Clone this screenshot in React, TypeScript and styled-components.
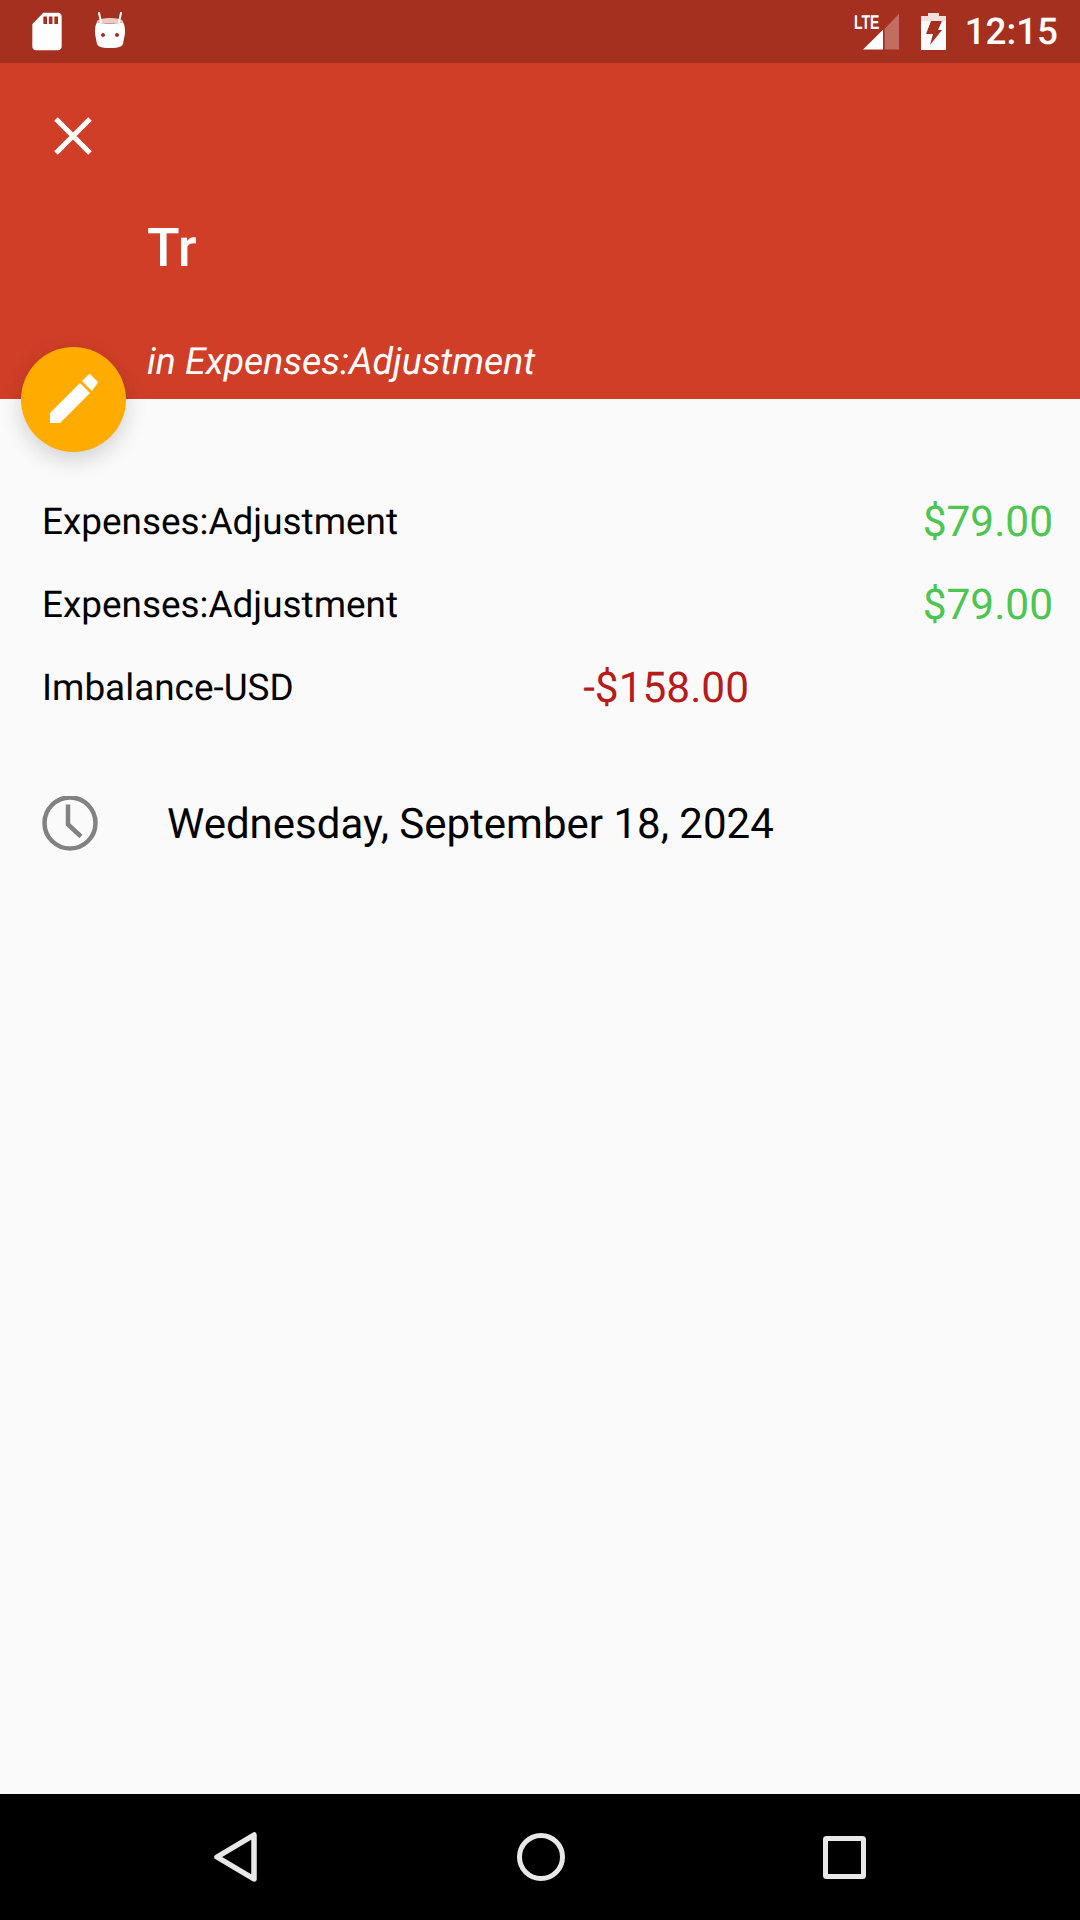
import React from "react";
import styled, { createGlobalStyle } from "styled-components";

const GlobalStyle = createGlobalStyle`
  html, body {
    margin: 0;
    padding: 0;
    background: #fafafa;
    font-family: Roboto, "Liberation Sans", sans-serif;
    text-rendering: geometricPrecision;
  }
`;

const Screen = styled.div`
  width: 1080px;
  height: 1920px;
  display: flex;
  flex-direction: column;
  background: #fafafa;
  overflow: hidden;
`;

const StatusBar = styled.div`
  height: 63px;
  flex: none;
  display: flex;
  align-items: center;
  padding: 0 22px 0 25px;
  background: #a5301f;
  color: #fff;
`;

const StatusLeft = styled.div`
  display: flex;
  align-items: center;
  gap: 23px;
  flex: 1;
`;

const StatusIcon = styled.svg`
  display: block;
  flex: none;
`;

const SignalBox = styled.div`
  position: relative;
  width: 46px;
  height: 40px;
  margin-right: 22px;
`;

const SignalBars = styled.svg`
  position: absolute;
  left: 0;
  top: 0;
`;

const LteLabel = styled.span`
  position: absolute;
  left: 1px;
  top: 1px;
  font-family: "Liberation Sans", Roboto, sans-serif;
  font-size: 20px;
  font-weight: 700;
  line-height: 20px;
  transform: scaleX(0.7);
  transform-origin: left top;
  color: #fff;
`;

const Clock = styled.span`
  font-size: 36.8px;
  font-weight: 500;
  line-height: 63px;
  margin-left: 19px;
  color: #fff;
`;

const Header = styled.header`
  position: relative;
  height: 336px;
  flex: none;
  display: flex;
  flex-direction: column;
  background: #d03e28;
  color: #fff;
`;

const CloseButton = styled.div`
  height: 146px;
  display: flex;
  align-items: center;
  padding-left: 49px;
  flex: none;
`;

const Title = styled.h1`
  margin: 8px 0 0 147px;
  font-size: 53.5px;
  font-weight: 500;
  line-height: 64px;
`;

const Subtitle = styled.p`
  margin: 57px 0 0 147px;
  font-size: 37.4px;
  font-style: italic;
  font-weight: 400;
  line-height: 48px;
`;

const Fab = styled.button`
  position: absolute;
  left: 21px;
  bottom: -53px;
  width: 105px;
  height: 105px;
  padding: 0;
  border: none;
  border-radius: 50%;
  display: flex;
  align-items: center;
  justify-content: center;
  background: #ffab00;
  box-shadow: 0 8px 22px rgba(0, 0, 0, 0.16);
`;

const Content = styled.main`
  flex: 1;
  display: flex;
  flex-direction: column;
  padding: 82px 27px 0 42px;
`;

const SplitRow = styled.div`
  height: 83px;
  display: flex;
  align-items: center;
  justify-content: space-between;
`;

const Account = styled.span`
  font-size: 36.9px;
  color: #000;
`;

const Amount = styled.span<{ $negative?: boolean; $inset?: number }>`
  font-size: 42.4px;
  color: ${(p) => (p.$negative ? "#b71c1c" : "#4cc552")};
  margin-right: ${(p) => p.$inset || 0}px;
`;

const DateRow = styled.div`
  display: flex;
  align-items: center;
  margin-top: 66px;
`;

const DateText = styled.span`
  margin-left: 69px;
  font-size: 42px;
  color: #000;
`;

const NavBar = styled.nav`
  height: 126px;
  flex: none;
  display: flex;
  align-items: center;
  justify-content: space-between;
  padding: 0 214px;
  background: #000;
`;

const Row = ({ name, value, negative, inset }: { name: string; value: string; negative?: boolean; inset?: number }) => (
  <SplitRow>
    <Account>{name}</Account>
    <Amount $negative={negative} $inset={inset}>{value}</Amount>
  </SplitRow>
);

const App: React.FC = () => {
  return (
    <Screen>
      <GlobalStyle />
      <StatusBar>
        <StatusLeft>
          <StatusIcon width="44" height="41" viewBox="0 0 24 22" preserveAspectRatio="none" fill="#fff">
            <path d="M18 1h-8L4.02 7 4 19c0 1.1.9 2 2 2h12c1.1 0 2-.9 2-2V3c0-1.1-.9-2-2-2zm-6 6h-2V3h2v4zm3 0h-2V3h2v4zm3 0h-2V3h2v4z" />
          </StatusIcon>
          <StatusIcon width="36" height="40" viewBox="0 0 36 40" fill="#fff">
            <path d="M7 1l2 9M29 1l-2 9" stroke="#fff" strokeWidth="2" strokeLinecap="round" />
            <path d="M18 6c6 0 11 1 13 3-1 2-1 2-13 2S6 11 5 9c2-2 7-3 13-3z" opacity="0.75" />
            <path fillRule="evenodd" d="M5 10c3 2 23 2 26 0 2 4 2 7 2 10 0 3-1 6-2 12-1 2-3 4-13 4S6 34 5 32c-1-6-2-9-2-12 0-3 0-6 2-10zm6 11a2 2 0 1 0 .01 0zm14 0a2 2 0 1 0 .01 0z" />
          </StatusIcon>
        </StatusLeft>
        <SignalBox>
          <SignalBars width="46" height="40" viewBox="0 0 46 40">
            <path d="M10 37.5L30 17.8V37.5z" fill="#fff" />
            <path d="M31.7 16.8L46 1.8V37.5H31.7z" fill="#fff" opacity="0.3" />
          </SignalBars>
          <LteLabel>LTE</LteLabel>
        </SignalBox>
        <StatusIcon width="25" height="37" viewBox="0 0 25 37">
          <path d="M7 0h11v3h7v5H0V3h7z" fill="#fff" opacity="0.85" />
          <path fillRule="evenodd" fill="#fff" d="M0 8h25v29H0zM10 8H21L17 17H21L9 32 12 21H5z" />
        </StatusIcon>
        <Clock>12:15</Clock>
      </StatusBar>

      <Header>
        <CloseButton>
          <svg width="48" height="48" viewBox="0 0 48 48" stroke="#fff" strokeWidth="5" fill="none">
            <path d="M7 7l34 34M41 7L7 41" />
          </svg>
        </CloseButton>
        <Title>Tr</Title>
        <Subtitle>in Expenses:Adjustment</Subtitle>
        <Fab>
          <svg width="105" height="105" viewBox="0 0 105 105" fill="#fff">
            <path d="M29 66L59 36 69 46 39 76H29z" />
            <path d="M61 34l6-6a2 2 0 0 1 3 0l6 6a2 2 0 0 1 0 3l-5 7z" />
          </svg>
        </Fab>
      </Header>

      <Content>
        <Row name="Expenses:Adjustment" value="$79.00" />
        <Row name="Expenses:Adjustment" value="$79.00" />
        <Row name="Imbalance-USD" value="-$158.00" negative inset={304} />
        <DateRow>
          <svg width="56" height="56" viewBox="0 0 56 56" fill="none" stroke="#828282" strokeWidth="4.5">
            <circle cx="28" cy="27" r="25.5" />
            <path d="M26 8.5v20l13 12" />
          </svg>
          <DateText>Wednesday, September 18, 2024</DateText>
        </DateRow>
      </Content>

      <NavBar>
        <svg width="44" height="50" viewBox="0 0 44 50" fill="none" stroke="#e8e8e8" strokeWidth="5.5" strokeLinejoin="round">
          <path d="M40 3v44L3 25z" />
        </svg>
        <svg width="48" height="48" viewBox="0 0 48 48" fill="none" stroke="#e8e8e8" strokeWidth="5">
          <circle cx="24" cy="24" r="21.5" />
        </svg>
        <svg width="43" height="43" viewBox="0 0 43 43" fill="none" stroke="#e8e8e8" strokeWidth="5" strokeLinejoin="round">
          <rect x="2.5" y="2.5" width="38" height="38" rx="1" />
        </svg>
      </NavBar>
    </Screen>
  );
};

export default App;
